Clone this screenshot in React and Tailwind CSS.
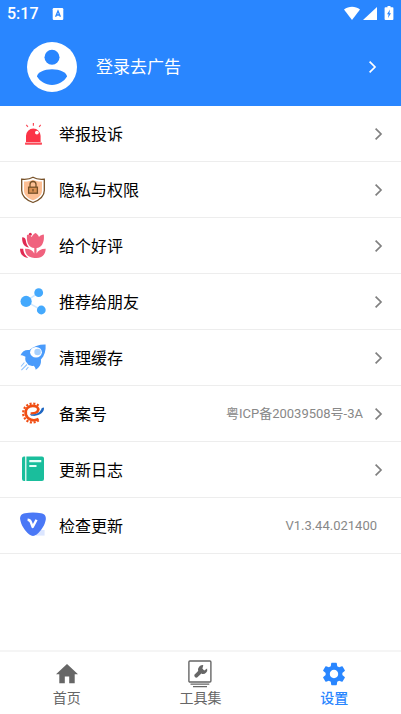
import { useState } from 'react';

const SirenIcon = () => (
  <svg className="w-7 h-7" viewBox="0 0 28 28" fill="none">
    <path d="M7 22V15.8a7.3 7.3 0 0 1 14.600 0V22Z" fill="#fb3447" />
    <rect x="6" y="22.600" width="17" height="2.100" rx=".6" fill="#fb4a58" />
    <circle cx="17.900" cy="12.600" r="1.900" fill="#fff" />
    <path d="M7.300 4.900l1.600 1.900M14.400 3.100v2.600M21.700 4.900l-1.600 1.900" stroke="#fb4a58" strokeWidth="1.200" />
  </svg>
);

const ShieldIcon = () => (
  <svg className="w-7 h-7" viewBox="0 0 28 28" fill="none">
    <path
      d="M14 1.300c-2.600 1.600-7 2.300-11.300 1.900v11.200c0 5.600 4.900 9.600 11.300 12.100 6.400-2.500 11.300-6.500 11.300-12.100V3.200c-4.300.4-8.700-.3-11.300-1.900Z"
      fill="#fff"
      stroke="#775128"
      strokeWidth="1.300"
    />
    <path d="M14 3.800c-2.200 1.300-5.600 1.900-9 1.800v8.800c0 4.600 3.600 7.700 9 9.900 5.400-2.200 9-5.300 9-9.900V5.600c-3.400.1-6.800-.5-9-1.800Z" fill="#fdbf94" />
    <rect x="9.600" y="11.200" width="8.800" height="6" fill="#d98f52" stroke="#775128" strokeWidth="1.300" />
    <path d="M11 11V8.500a3 3 0 0 1 6 0V11M14 13v2.400" stroke="#775128" strokeWidth="1.300" />
  </svg>
);

const TulipIcon = () => (
  <svg className="w-7 h-7" viewBox="0 0 28 28" fill="none">
    <path d="M3.200 5.200c2.300.2 3.200 1 3.600 3 .4 3 1.400 5.400 3.200 7.400C5.600 15 2.600 11.300 3.200 5.200ZM1 16.700h3.200c.3 4 2 7 5 9.200-5-.3-8.200-3.900-8.200-9.200Z" fill="#e02a52" />
    <circle cx="11.300" cy="2.300" r="1.500" fill="#e02a52" />
    <path d="M16.500.9c1.700 1 2.900 2.300 3.500 4 1.400-1.400 3-2.200 4.800-2.300.8 7.300-1.600 12.700-7.300 13.500v5.500c1.700-3.400 5-5 9.200-4.900-.1 6-3.800 9.200-9.200 9.200h-2.200c-5.600-.1-9.100-3.300-9.300-9.200 4.500-.2 7.800 1.500 9.300 4.900v-5.500C9.400 15.200 7.300 10.500 8 2.800c2 .1 3.500.8 4.800 2.100.6-1.700 1.900-3 3.700-4Z" fill="#f0627e" />
  </svg>
);

const ShareIcon = () => (
  <svg className="w-7 h-7" viewBox="0 0 28 28" fill="none">
    <path d="M19.700 4.700 7 13.300 22.300 22" stroke="#cfe8ff" strokeWidth="1.500" />
    <circle cx="19.700" cy="4.700" r="4.400" fill="#44a9fd" />
    <circle cx="7.100" cy="13.400" r="5.600" fill="#44a9fd" />
    <circle cx="22.300" cy="22" r="4.400" fill="#44a9fd" />
  </svg>
);

const RocketIcon = () => (
  <svg className="w-7 h-7" viewBox="0 0 28 28" fill="none">
    <path d="M26.600.4c.5 6-1 11.200-4.700 15.200.5 4.400-1.100 7.900-5.200 10.200-.2-1.800-.9-3.100-2.100-4.100-1.700.4-3.400.1-5-.6l-2.800-3.600c-.6-1.700-.7-3.200-.3-4.700-1.300-1-3-1.600-5-1.600 1.800-4.100 4.800-5.800 8.900-5.200C14.400 2.100 20.400.2 26.600.4Z" fill="#4a9bfb" />
    <ellipse cx="17" cy="8.200" rx="5.900" ry="5.200" fill="#fff" />
    <circle cx="18.600" cy="8" r="3.300" fill="#a7d0fd" />
    <path d="M5.400 18.500l-3.400 4M8 20.500l-5.600 5.700M9.400 23l-2.400 2.800" stroke="#8fc2fc" strokeWidth="1.100" />
  </svg>
);

const RecordIcon = () => (
  <svg className="w-7 h-7" viewBox="0 0 28 28" fill="none">
    <path d="M19.600 5.600A9.500 9.500 0 1 0 19.600 20.400" stroke="#f04e14" strokeWidth="2.200" strokeDasharray="2.100 1.600" />
    <path d="M19.600 19c-4.600 2.600-11.200 1-12.700-4.300C5.400 9.200 9.400 5.700 14 5.900c4 .2 6 2.300 5 4.600-1 2.300-4.200 3.100-7.400 3" stroke="#f04e14" strokeWidth="2.600" />
    <path d="M25 7.600c.4 4.800-4.500 8.900-11.600 8.200-1.400-.2-2.200-.8-2.600-1.600 5.800.8 10.400-1 12-6.200Z" fill="#1d66c2" />
  </svg>
);

const BookIcon = () => (
  <svg className="w-7 h-7" viewBox="0 0 28 28" fill="none">
    <path d="M6.200.4V25H5a2 2 0 0 1-2-2V2.400a2 2 0 0 1 2-2ZM7.400.4H23a2 2 0 0 1 2 2V23a2 2 0 0 1-2 2H7.400Z" fill="#1abe9c" />
    <path d="M10.300 5.200h12M10.300 10h7.200" stroke="#e8fff9" strokeWidth="2.200" />
  </svg>
);

const VersionIcon = () => (
  <svg className="w-7 h-7" viewBox="0 0 28 28" fill="none">
    <path d="M17 18h8.600v5.600H17z" fill="#dce6ff" />
    <path d="M6 1.200c5-.8 11-.8 16 0 3.600.5 5.300 3 4.800 6.400-.9 5.600-4.400 11-9.100 15-2.300 1.900-5.100 1.900-7.400 0-4.700-4-8.200-9.400-9.100-15C.7 4.200 2.400 1.700 6 1.200Z" fill="#4a78f6" />
    <path d="M8.600 7.700c2 .1 2.600.7 3.200 2.300l1.900 5 3.800-7.300" stroke="#fff" strokeWidth="2.400" strokeLinejoin="round" />
  </svg>
);

const HomeIcon = () => (
  <svg className="w-7 h-7" viewBox="0 0 28 28" fill="currentColor">
    <path d="M14 4 3 14.200h3.300V23.200h5.500v-6.800h4.400v6.800h5.500v-9H25Z" />
  </svg>
);

const ToolsIcon = () => (
  <svg className="w-7 h-7" viewBox="0 0 28 28" fill="none" stroke="currentColor">
    <rect x="2.900" y="1" width="22" height="21" rx="1" strokeWidth="1.400" />
    <path d="M4.500 24.200h18.800M7 26.600h14" strokeWidth="1.300" />
    <path d="M10.300 15.700l5.200-5.200" strokeWidth="3.900" strokeLinecap="round" />
    <path d="M17.300 5.200a4.400 4.400 0 0 0-5 5.800l3.900 3a4.400 4.400 0 0 0 4.900-5.600l-2.800 2.100-2-1.500Z" fill="currentColor" stroke="none" />
  </svg>
);

const SettingsIcon = () => (
  <svg className="w-7 h-7" viewBox="0 0 24 24" fill="currentColor">
    <path d="M19.140 12.940c.04-.3.06-.61.06-.94s-.02-.64-.07-.94l2.030-1.580c.18-.14.23-.41.120-.61l-1.920-3.320c-.12-.22-.37-.29-.59-.22l-2.390.96c-.5-.38-1.030-.7-1.620-.94l-.36-2.540c-.04-.24-.24-.41-.48-.41h-3.840c-.24 0-.43.17-.47.41l-.36 2.540c-.59.24-1.130.57-1.620.94l-2.390-.96c-.22-.08-.47 0-.59.220L2.740 8.870c-.12.21-.08.47.120.61l2.030 1.580c-.05.3-.09.63-.09.94s.02.64.07.94l-2.030 1.580c-.18.14-.23.41-.12.61l1.920 3.320c.12.22.37.29.59.22l2.390-.96c.5.38 1.030.7 1.620.94l.36 2.540c.05.24.24.41.48.41h3.840c.24 0 .44-.17.47-.41l.36-2.540c.59-.24 1.130-.56 1.620-.94l2.390.96c.22.08.47 0 .59-.22l1.920-3.320c.12-.22.07-.47-.12-.61zM12 15.600c-1.980 0-3.600-1.620-3.600-3.600s1.620-3.600 3.600-3.600 3.600 1.620 3.600 3.600-1.620 3.600-3.600 3.600" />
  </svg>
);

const Chevron = () => (
  <svg className="w-2 h-3 shrink-0" viewBox="0 0 8 12" fill="none" stroke="currentColor" strokeWidth="1.700">
    <path d="M.6.600 6 6 .6 11.400" />
  </svg>
);

const StatusBar = () => (
  <div className="flex h-7 items-center px-[7px]">
    <span className="text-base font-medium">5:17</span>
    <svg className="ml-[13px] h-3 w-3" viewBox="0 0 12 12">
      <rect x=".7" y="0" width="10.600" height="12" rx="1.200" fill="#fff" />
      <path d="M3.600 8.800 6 3l2.400 5.800M4.500 7h3" stroke="#2986ff" strokeWidth="1.300" fill="none" />
    </svg>
    <svg className="ml-auto h-4 w-[50px]" viewBox="0 0 50 16" fill="#fff">
      <path d="M0 3.500C4.800-.3 11.300-.3 16 3.500L8 14Z" />
      <path d="M33 1v13H19Z" />
      <path d="M43.500 0h3v1.200h2c.6 0 .9.3.9.9V13c0 .6-.3 1-.9 1h-7c-.6 0-.9-.4-.9-1V2.100c0-.6.3-.9.900-.9h2Z" />
      <path d="M46 3.600 43 8.200h1.600L44 12l3-4.800h-1.600Z" fill="#2986ff" />
    </svg>
  </div>
);

const MENU_ITEMS = [
  { label: '举报投诉', icon: SirenIcon },
  { label: '隐私与权限', icon: ShieldIcon },
  { label: '给个好评', icon: TulipIcon },
  { label: '推荐给朋友', icon: ShareIcon },
  { label: '清理缓存', icon: RocketIcon },
  { label: '备案号', icon: RecordIcon, value: '粤ICP备20039508号-3A' },
  { label: '更新日志', icon: BookIcon },
  { label: '检查更新', icon: VersionIcon, value: 'V1.3.44.021400', noArrow: true },
];

const TABS = [
  { id: 'home', label: '首页', icon: HomeIcon },
  { id: 'tools', label: '工具集', icon: ToolsIcon },
  { id: 'settings', label: '设置', icon: SettingsIcon },
];

const App = () => {
  const [activeTab, setActiveTab] = useState('settings');

  return (
    <div className="flex min-h-screen flex-col bg-white font-['Roboto','Noto_Sans_CJK_SC',sans-serif]">
      <header className="bg-[#2986ff] text-white">
        <StatusBar />
        <button className="flex h-[78px] w-full items-center pl-[27px] pr-6 text-left">
          <svg className="h-[50px] w-[50px] shrink-0" viewBox="0 0 50 50">
            <circle cx="25" cy="25" r="25" fill="#fff" />
            <circle cx="25" cy="15.200" r="7.500" fill="#2986ff" />
            <path d="M10 34.500c0-3.800 7-7.300 15-7.300s15 3.500 15 7.300c-3 4.900-8.500 8.400-15 8.400s-12-3.500-15-8.400Z" fill="#2986ff" />
          </svg>
          <span className="ml-[19px] flex-1 pt-0.5 text-[17px]">登录去广告</span>
          <Chevron />
        </button>
      </header>

      <main className="flex-1">
        <ul>
          {MENU_ITEMS.map(({ label, icon: Icon, value, noArrow }) => (
            <li key={label} className="border-b border-[#ededed]">
              <button className={`flex h-[55px] w-full items-center pl-[19px] text-left ${noArrow ? 'pr-6' : 'pr-[18px]'}`}>
                <Icon />
                <span className="ml-3 flex-1 pt-0.5 text-base text-black">{label}</span>
                {value && <span className="text-[13px] text-[#888]">{value}</span>}
                {!noArrow && (
                  <span className="ml-3 text-[#808080]">
                    <Chevron />
                  </span>
                )}
              </button>
            </li>
          ))}
        </ul>
      </main>

      <nav className="grid grid-cols-3 border-t-2 border-[#f5f5f5]">
        {TABS.map(({ id, label, icon: Icon }) => (
          <button
            key={id}
            onClick={() => setActiveTab(id)}
            className={`flex flex-col items-center pt-2 pb-1.5 ${activeTab === id ? 'font-medium text-[#2986ff]' : 'text-[#666]'}`}
          >
            <Icon />
            <span className="text-sm">{label}</span>
          </button>
        ))}
      </nav>
    </div>
  );
};

export default App;
